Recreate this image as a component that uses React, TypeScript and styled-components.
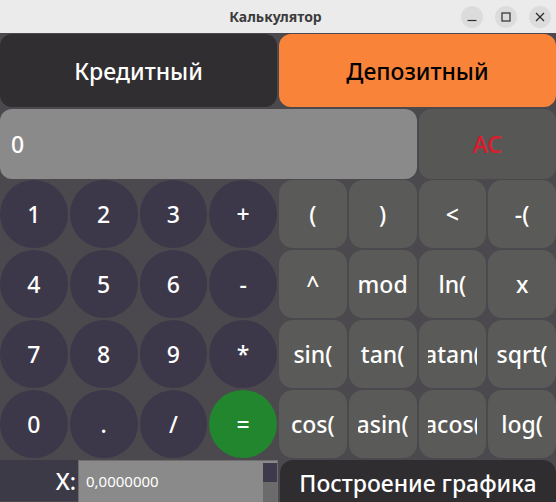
import React from "react";
import styled, { createGlobalStyle } from "styled-components";

const GlobalStyle = createGlobalStyle`
  html, body { margin: 0; padding: 0; background: #4b494e; }
  body { font-family: "Noto Sans", "DejaVu Sans", sans-serif; }
  * { box-sizing: border-box; }
`;

const Window = styled.div`
  width: 556px;
  height: 502px;
  overflow: hidden;
  display: flex;
  flex-direction: column;
  background: #4b494e;
`;

const TitleBar = styled.div`
  height: 33px;
  flex: none;
  background: #ebebeb;
  display: grid;
  grid-template-columns: 1fr auto 1fr;
  align-items: center;
  padding-right: 5px;
`;

const Title = styled.div`
  grid-column: 2;
  font-size: 14px;
  font-weight: 700;
  color: #3c3c3c;
`;

const Controls = styled.div`
  grid-column: 3;
  justify-self: end;
  display: flex;
  gap: 12px;
`;

const CtrlButton = styled.div`
  width: 22px;
  height: 22px;
  border-radius: 50%;
  background: #dcdcdc;
  display: flex;
  align-items: center;
  justify-content: center;
`;

const Body = styled.div`
  flex: 1;
  display: flex;
  flex-direction: column;
  padding-top: 1px;
  font-size: 23px;
  font-weight: 500;
`;

const ModeRow = styled.div`
  display: grid;
  grid-template-columns: 1fr 1fr;
  gap: 2px;
  height: 73px;
`;

const ModeButton = styled.div<{ $active?: boolean }>`
  border-radius: 12px;
  background: ${(p) => (p.$active ? "#f98439" : "#302e31")};
  color: ${(p) => (p.$active ? "#000000" : "#ffffff")};
  display: flex;
  align-items: center;
  justify-content: center;
`;

const DisplayRow = styled.div`
  margin-top: 2px;
  display: grid;
  grid-template-columns: repeat(8, 1fr);
  gap: 2px;
  height: 70px;
`;

const Display = styled.div`
  grid-column: span 6;
  background: #8a8a8a;
  border-radius: 12px;
  color: #ffffff;
  display: flex;
  align-items: center;
  padding-left: 11px;
`;

const ClearButton = styled.div`
  grid-column: span 2;
  background: #575755;
  border-radius: 12px;
  color: #e01a2d;
  display: flex;
  align-items: center;
  justify-content: center;
`;

const Keypad = styled.div`
  margin-top: 1px;
  display: grid;
  grid-template-columns: repeat(8, 1fr);
  grid-auto-rows: 68px;
  gap: 2px;
`;

const Key = styled.div<{ $kind: "num" | "fn" | "eq" }>`
  border-radius: ${(p) => (p.$kind === "fn" ? "14px" : "50%")};
  background: ${(p) =>
    p.$kind === "fn" ? "#5a5a58" : p.$kind === "eq" ? "#22862f" : "#3c3849"};
  color: #ffffff;
  display: flex;
  align-items: center;
  padding: 0 9px;
  min-width: 0;
`;

const KeyClip = styled.div`
  flex: 1;
  min-width: 0;
  overflow: hidden;
  display: flex;
  justify-content: center;
  white-space: nowrap;
`;

const KeyText = styled.span`
  flex: none;
`;

const BottomRow = styled.div`
  margin-top: 2px;
  display: grid;
  grid-template-columns: 78px 200px 1fr;
  height: 46px;
`;

const XLabel = styled.div`
  background: #3c3a46;
  color: #ffffff;
  display: flex;
  align-items: center;
  justify-content: flex-end;
  padding-right: 2px;
  height: 41px;
`;

const XInput = styled.div`
  background: #8a8a8a;
  border: 1px solid #6e6e6e;
  display: flex;
  align-items: stretch;
  height: 46px;
`;

const XValue = styled.div`
  flex: 1;
  color: #ffffff;
  font-size: 15px;
  font-weight: 400;
  display: flex;
  align-items: center;
  padding-left: 7px;
  padding-bottom: 4px;
`;

const ScrollBar = styled.div`
  width: 14px;
  margin-top: 2px;
  background: #6b6b6b;
  display: flex;
  flex-direction: column;
`;

const ScrollThumb = styled.div`
  height: 19px;
  background: #3e3a4c;
`;

const GraphButton = styled.div`
  margin-left: 2px;
  background: #2f2d30;
  border-radius: 13px;
  color: #ffffff;
  display: flex;
  align-items: center;
  justify-content: center;
  padding-bottom: 6px;
  height: 52px;
  white-space: nowrap;
`;

type K = { t: string; k: "num" | "fn" | "eq" };
const keys: K[] = [
  { t: "1", k: "num" }, { t: "2", k: "num" }, { t: "3", k: "num" }, { t: "+", k: "num" },
  { t: "(", k: "fn" }, { t: ")", k: "fn" }, { t: "<", k: "fn" }, { t: "-(", k: "fn" },
  { t: "4", k: "num" }, { t: "5", k: "num" }, { t: "6", k: "num" }, { t: "-", k: "num" },
  { t: "^", k: "fn" }, { t: "mod", k: "fn" }, { t: "ln(", k: "fn" }, { t: "x", k: "fn" },
  { t: "7", k: "num" }, { t: "8", k: "num" }, { t: "9", k: "num" }, { t: "*", k: "num" },
  { t: "sin(", k: "fn" }, { t: "tan(", k: "fn" }, { t: "atan(", k: "fn" }, { t: "sqrt(", k: "fn" },
  { t: "0", k: "num" }, { t: ".", k: "num" }, { t: "/", k: "num" }, { t: "=", k: "eq" },
  { t: "cos(", k: "fn" }, { t: "asin(", k: "fn" }, { t: "acos(", k: "fn" }, { t: "log(", k: "fn" },
];

const Icon = ({ kind }: { kind: "min" | "max" | "close" }) => (
  <svg width="12" height="12" viewBox="0 0 12 12" fill="none" stroke="#2e2e2e" strokeWidth="1.2">
    {kind === "min" && <line x1="1.5" y1="9.5" x2="10.5" y2="9.5" />}
    {kind === "max" && <rect x="2" y="2" width="8" height="8" />}
    {kind === "close" && (
      <>
        <line x1="2" y1="2" x2="10" y2="10" />
        <line x1="10" y1="2" x2="2" y2="10" />
      </>
    )}
  </svg>
);

export default function App() {
  return (
    <>
      <GlobalStyle />
      <Window>
        <TitleBar>
          <Title>Калькулятор</Title>
          <Controls>
            <CtrlButton><Icon kind="min" /></CtrlButton>
            <CtrlButton><Icon kind="max" /></CtrlButton>
            <CtrlButton><Icon kind="close" /></CtrlButton>
          </Controls>
        </TitleBar>
        <Body>
          <ModeRow>
            <ModeButton>Кредитный</ModeButton>
            <ModeButton $active>Депозитный</ModeButton>
          </ModeRow>
          <DisplayRow>
            <Display>0</Display>
            <ClearButton>AC</ClearButton>
          </DisplayRow>
          <Keypad>
            {keys.map((key, i) => (
              <Key key={i} $kind={key.k}>
                <KeyClip>
                  <KeyText>{key.t}</KeyText>
                </KeyClip>
              </Key>
            ))}
          </Keypad>
          <BottomRow>
            <XLabel>X:</XLabel>
            <XInput>
              <XValue>0,0000000</XValue>
              <ScrollBar>
                <ScrollThumb />
              </ScrollBar>
            </XInput>
            <GraphButton>Построение графика</GraphButton>
          </BottomRow>
        </Body>
      </Window>
    </>
  );
}
